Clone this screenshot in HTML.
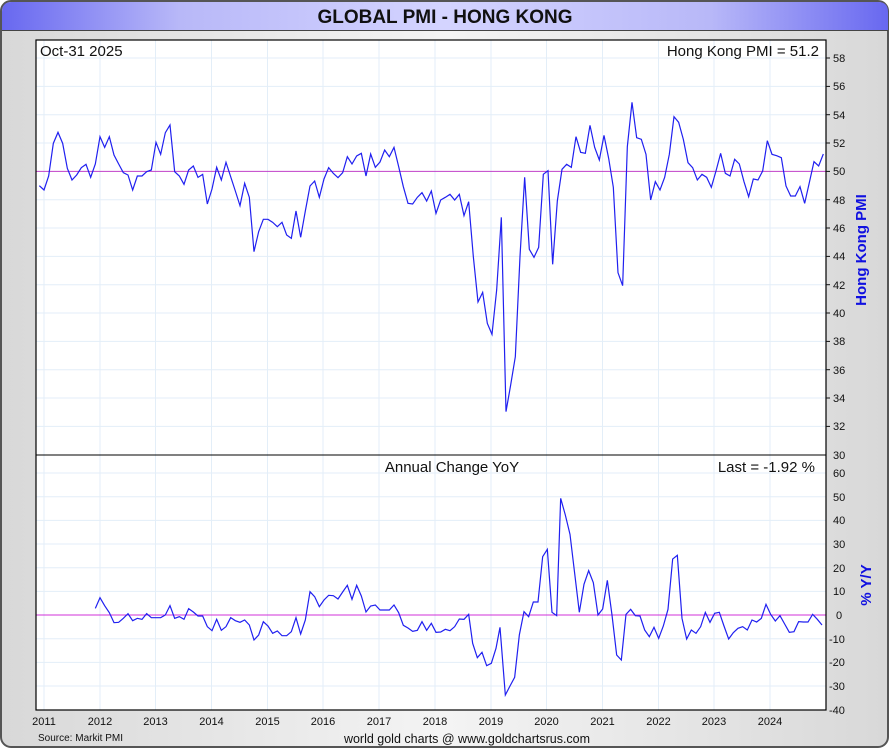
<!DOCTYPE html>
<html><head><meta charset="utf-8"><style>
body{margin:0;width:890px;height:750px;overflow:hidden;font-family:"Liberation Sans",sans-serif;background:#fff}
</style></head><body>
<svg width="890" height="750" xmlns="http://www.w3.org/2000/svg" font-family="Liberation Sans, sans-serif">
<defs>
<linearGradient id="bg" x1="0" x2="1" y1="0" y2="0"><stop offset="0" stop-color="#d8d8d8"/><stop offset="0.5" stop-color="#f4f4f4"/><stop offset="1" stop-color="#d8d8d8"/></linearGradient>
<linearGradient id="tb" x1="0" x2="1" y1="0" y2="0"><stop offset="0" stop-color="#6868f0"/><stop offset="0.2" stop-color="#b8b8f8"/><stop offset="0.5" stop-color="#d4d4ff"/><stop offset="0.8" stop-color="#b8b8f8"/><stop offset="1" stop-color="#6868f0"/></linearGradient>
</defs>
<rect x="0" y="0" width="890" height="750" fill="#fff"/>
<rect x="1" y="1" width="887" height="746" rx="10" fill="url(#bg)" stroke="#555" stroke-width="2"/>
<path d="M2,30 L2,12 Q2,2 12,2 L878,2 Q888,2 888,12 L888,30 Z" fill="url(#tb)"/>
<line x1="2" y1="30.5" x2="888" y2="30.5" stroke="#444" stroke-width="1"/>
<text x="445" y="23" text-anchor="middle" font-size="19" font-weight="bold" fill="#111">GLOBAL PMI - HONG KONG</text>
<rect x="36" y="40" width="790" height="670" fill="#fff"/>
<g stroke="#e3eef8" stroke-width="1">
<line x1="44" y1="40" x2="44" y2="710"/><line x1="100" y1="40" x2="100" y2="710"/><line x1="155.5" y1="40" x2="155.5" y2="710"/><line x1="211.5" y1="40" x2="211.5" y2="710"/><line x1="267.5" y1="40" x2="267.5" y2="710"/><line x1="323" y1="40" x2="323" y2="710"/><line x1="379" y1="40" x2="379" y2="710"/><line x1="435" y1="40" x2="435" y2="710"/><line x1="491" y1="40" x2="491" y2="710"/><line x1="546.5" y1="40" x2="546.5" y2="710"/><line x1="602.5" y1="40" x2="602.5" y2="710"/><line x1="658.5" y1="40" x2="658.5" y2="710"/><line x1="714" y1="40" x2="714" y2="710"/><line x1="770" y1="40" x2="770" y2="710"/>
<line x1="36" y1="58" x2="826" y2="58"/><line x1="36" y1="86.4" x2="826" y2="86.4"/><line x1="36" y1="114.7" x2="826" y2="114.7"/><line x1="36" y1="143" x2="826" y2="143"/><line x1="36" y1="199.7" x2="826" y2="199.7"/><line x1="36" y1="228" x2="826" y2="228"/><line x1="36" y1="256.4" x2="826" y2="256.4"/><line x1="36" y1="284.7" x2="826" y2="284.7"/><line x1="36" y1="313" x2="826" y2="313"/><line x1="36" y1="341.4" x2="826" y2="341.4"/><line x1="36" y1="369.7" x2="826" y2="369.7"/><line x1="36" y1="398" x2="826" y2="398"/><line x1="36" y1="426.4" x2="826" y2="426.4"/>
<line x1="36" y1="473" x2="826" y2="473"/><line x1="36" y1="496.7" x2="826" y2="496.7"/><line x1="36" y1="520.4" x2="826" y2="520.4"/><line x1="36" y1="544" x2="826" y2="544"/><line x1="36" y1="567.7" x2="826" y2="567.7"/><line x1="36" y1="591.4" x2="826" y2="591.4"/><line x1="36" y1="638.7" x2="826" y2="638.7"/><line x1="36" y1="662.4" x2="826" y2="662.4"/><line x1="36" y1="686" x2="826" y2="686"/>
</g>
<line x1="36" y1="171.4" x2="826" y2="171.4" stroke="#c040c8" stroke-width="1"/>
<line x1="36" y1="615" x2="826" y2="615" stroke="#d030d8" stroke-width="1"/>
<g transform="translate(36,90) scale(0.33333)"><polyline fill="none" stroke="#2020f0" stroke-width="1.2" vector-effect="non-scaling-stroke" points="10,287 24,300 38,258 52,160 66,127 80,160 94,235 108,270 122,255 136,233 150,223 164,262 178,222 192,140 206,172 220,140 234,195 248,222 262,248 276,255 290,300 304,258 318,258 332,245 346,240 360,157 374,193 388,128 402,105 416,245 430,258 444,283 458,240 472,228 486,262 500,253 514,342 528,297 542,232 556,270 570,217 584,260 598,303 612,347 626,280 640,322 654,485 668,425 682,388 696,388 710,397 724,410 738,397 752,435 766,445 780,363 794,442 808,363 822,288 836,273 850,322 864,267 878,233 892,250 906,263 920,248 934,200 948,222 962,198 976,190 990,258 1004,192 1018,232 1032,216 1046,180 1060,200 1074,172 1088,230 1102,290 1116,340 1130,342 1144,322 1158,308 1172,333 1186,303 1200,370 1214,330 1228,322 1242,313 1256,330 1270,313 1284,377 1298,335 1312,500 1326,636 1340,607 1354,700 1368,733 1382,600 1396,382 1410,965 1424,885 1438,800 1452,500 1466,262 1480,478 1494,502 1508,472 1522,253 1536,242 1550,523 1564,333 1578,238 1592,223 1606,232 1620,140 1634,187 1648,190 1662,106 1676,172 1690,210 1704,136 1718,205 1732,292 1746,548 1760,587 1774,170 1788,37 1802,143 1816,148 1830,193 1844,330 1858,275 1872,300 1886,262 1900,193 1914,80 1928,97 1942,148 1956,218 1970,233 1984,270 1998,253 2012,262 2026,292 2040,243 2054,190 2068,250 2082,258 2096,208 2110,222 2124,275 2138,320 2152,267 2166,270 2180,243 2194,152 2208,193 2222,197 2236,203 2250,288 2264,318 2278,318 2292,290 2306,340 2320,278 2334,215 2348,228 2362,192"/></g>
<g transform="translate(90,570) scale(0.33333)"><polyline fill="none" stroke="#2020f0" stroke-width="1.2" vector-effect="non-scaling-stroke" points="16,115 30,83 44,107 58,128 72,158 86,157 100,145 114,131 128,152 142,145 156,148 170,131 184,143 198,143 212,143 226,135 240,107 254,145 268,140 282,148 296,116 310,126 324,138 338,138 352,170 366,182 380,148 394,181 408,170 422,143 436,152 450,157 464,150 478,165 492,210 506,195 520,155 534,168 548,190 562,183 576,197 590,197 604,185 618,143 632,192 646,150 660,65 674,80 688,110 702,90 716,76 730,77 744,87 758,66 772,46 786,88 800,46 814,78 828,126 842,108 856,105 870,120 884,120 898,120 912,105 926,128 940,166 954,174 968,184 982,181 996,155 1010,181 1024,160 1038,187 1052,186 1066,178 1080,182 1094,170 1108,147 1122,148 1136,133 1148,220 1162,263 1176,247 1190,287 1204,280 1218,235 1230,172 1246,375 1260,348 1274,322 1288,195 1302,125 1316,140 1330,96 1344,96 1358,-40 1372,-62 1386,127 1400,137 1412,-215 1426,-165 1440,-107 1454,10 1468,127 1482,43 1496,2 1510,38 1524,135 1538,117 1552,31 1566,135 1580,255 1594,270 1608,133 1622,118 1636,137 1650,138 1664,180 1678,200 1692,172 1706,205 1720,168 1734,118 1748,-33 1762,-44 1776,145 1790,207 1804,180 1818,190 1832,170 1846,127 1860,157 1874,130 1888,127 1902,168 1916,207 1930,188 1944,175 1958,170 1972,180 1986,150 2000,156 2014,145 2028,103 2042,133 2056,153 2070,137 2084,162 2098,187 2112,185 2126,155 2140,156 2154,156 2168,133 2182,148 2196,165"/></g>
<rect x="36" y="40" width="790" height="670" fill="none" stroke="#000" stroke-width="1.2"/>
<line x1="36" y1="455" x2="826" y2="455" stroke="#000" stroke-width="1"/>
<g font-size="15" fill="#111">
<text x="40" y="56">Oct-31  2025</text>
<text x="819" y="56" text-anchor="end">Hong Kong PMI = 51.2</text>
<text x="452" y="472" text-anchor="middle">Annual Change YoY</text>
<text x="815" y="472" text-anchor="end">Last = -1.92 %</text>
</g>
<g font-size="11" fill="#111">
<text x="833" y="62">58</text><text x="833" y="90">56</text><text x="833" y="119">54</text><text x="833" y="147">52</text><text x="833" y="175">50</text><text x="833" y="204">48</text><text x="833" y="232">46</text><text x="833" y="260">44</text><text x="833" y="289">42</text><text x="833" y="317">40</text><text x="833" y="345">38</text><text x="833" y="374">36</text><text x="833" y="402">34</text><text x="833" y="430">32</text><text x="833" y="459">30</text>
<text x="833" y="477">60</text><text x="833" y="501">50</text><text x="833" y="524">40</text><text x="833" y="548">30</text><text x="833" y="572">20</text><text x="833" y="595">10</text><text x="836" y="619">0</text><text x="829" y="643">-10</text><text x="829" y="666">-20</text><text x="829" y="690">-30</text><text x="829" y="714">-40</text>
</g>
<g stroke="#111" stroke-width="1">
<line x1="826" y1="58" x2="830" y2="58"/><line x1="826" y1="86.4" x2="830" y2="86.4"/><line x1="826" y1="114.7" x2="830" y2="114.7"/><line x1="826" y1="143" x2="830" y2="143"/><line x1="826" y1="171.4" x2="830" y2="171.4"/><line x1="826" y1="199.7" x2="830" y2="199.7"/><line x1="826" y1="228" x2="830" y2="228"/><line x1="826" y1="256.4" x2="830" y2="256.4"/><line x1="826" y1="284.7" x2="830" y2="284.7"/><line x1="826" y1="313" x2="830" y2="313"/><line x1="826" y1="341.4" x2="830" y2="341.4"/><line x1="826" y1="369.7" x2="830" y2="369.7"/><line x1="826" y1="398" x2="830" y2="398"/><line x1="826" y1="426.4" x2="830" y2="426.4"/>
</g>
<text transform="translate(866,250) rotate(-90)" text-anchor="middle" font-size="15" font-weight="bold" fill="#1010e0">Hong Kong PMI</text>
<text transform="translate(871,585) rotate(-90)" text-anchor="middle" font-size="15" font-weight="bold" fill="#1010e0">% Y/Y</text>
<g font-size="11" fill="#111" text-anchor="middle">
<text x="44" y="725">2011</text><text x="100" y="725">2012</text><text x="155.5" y="725">2013</text><text x="211.5" y="725">2014</text><text x="267.5" y="725">2015</text><text x="323" y="725">2016</text><text x="379" y="725">2017</text><text x="435" y="725">2018</text><text x="491" y="725">2019</text><text x="546.5" y="725">2020</text><text x="602.5" y="725">2021</text><text x="658.5" y="725">2022</text><text x="714" y="725">2023</text><text x="770" y="725">2024</text>
</g>
<text x="38" y="741" font-size="10" fill="#111">Source: Markit PMI</text>
<text x="467" y="743" font-size="12.5" fill="#111" text-anchor="middle">world gold charts @ www.goldchartsrus.com</text>
</svg>
</body></html>
